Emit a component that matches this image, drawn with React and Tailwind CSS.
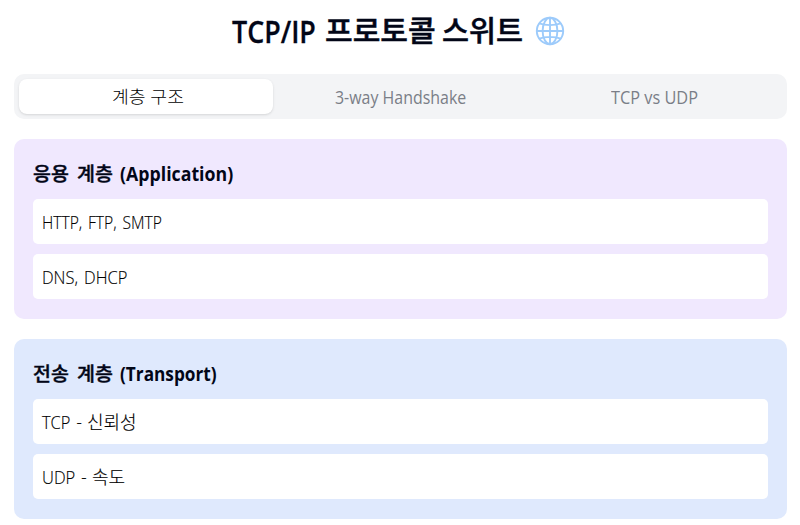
import React, { useLayoutEffect, useRef, useState } from "react";

const layers = [
  {
    color: "bg-[#f0e8fe]",
    title: [["응용 계층", 80], ["(Application)", 113]],
    rows: [
      [["HTTP, FTP, SMTP", 120]],
      [["DNS, DHCP", 85]],
    ],
  },
  {
    color: "bg-[#dfe9fd]",
    title: [["전송 계층", 80], ["(Transport)", 97]],
    rows: [
      [["TCP -", 40], ["신뢰성", 50]],
      [["UDP -", 45], ["속도", 33]],
    ],
  },
];

// Condenses or widens a run of text so that it fills the given width.
function Fit({ width, className = "", children }) {
  const ref = useRef(null);
  const [scale, setScale] = useState(1);
  useLayoutEffect(() => {
    setScale(width / ref.current.offsetWidth);
  }, [width]);
  return (
    <span className="inline-block shrink-0" style={{ width }}>
      <span
        ref={ref}
        className={`inline-block origin-left whitespace-pre ${className}`}
        style={{ transform: `scaleX(${scale})` }}
      >
        {children}
      </span>
    </span>
  );
}

function Globe() {
  return (
    <svg className="h-[30px] w-[30px]" viewBox="0 0 30 30" fill="none" stroke="#9dcbfb" strokeWidth="1.9">
      <circle cx="15" cy="15" r="13.2" />
      <ellipse cx="15" cy="15" rx="7.4" ry="13.2" />
      <path d="M15 1.8v26.4M1.8 15h26.4M4.2 7.4c6 2.3 15.6 2.3 21.6 0M4.2 22.6c6-2.3 15.6-2.3 21.6 0" />
    </svg>
  );
}

export default function App() {
  return (
    <main className="h-[525px] w-[800px] overflow-hidden bg-white pl-[14px] pr-[13px] font-['Open_Sans','Noto_Sans_CJK_KR',sans-serif] text-[#020617]">
      <h1 className="flex h-[74px] items-start pl-[218px] pt-[11px] text-[29px] leading-[40px] font-medium">
        <Fit width={84} className="text-[31px] font-semibold [-webkit-text-stroke:0.3px]">TCP/IP</Fit>
        <span className="ml-[9px] flex [-webkit-text-stroke:0.5px]">
          <Fit width={111}>프로토콜</Fit>
          <span className="ml-[6px]"><Fit width={81}>스위트</Fit></span>
        </span>
        <span className="ml-[12px] pt-[5px]"><Globe /></span>
      </h1>
      <div className="grid h-[45px] grid-cols-3 rounded-[10px] bg-[#f3f4f6] p-[5px] text-[18px] text-[#7a7e87]">
        <button className="flex items-center justify-center rounded-[8px] bg-white pr-[2px] text-[17px] font-light text-black shadow-sm"><Fit width={72}>계층 구조</Fit></button>
        <button className="flex items-center justify-center pt-px"><Fit width={131}>3-way Handshake</Fit></button>
        <button className="flex items-center justify-center pt-px"><Fit width={87}>TCP vs UDP</Fit></button>
      </div>
      {layers.map((layer) => (
        <section key={layer.color} className={`mt-5 h-[180px] rounded-[10px] px-[19px] pt-5 ${layer.color}`}>
          <h2 className="flex h-[40px] gap-[7px] text-[19px] leading-[31px] font-bold">
            {layer.title.map(([text, width], i) => (
              <Fit key={text} width={width} className={i === 0 ? "font-medium [-webkit-text-stroke:0.4px] [word-spacing:3px]" : ""}>{text}</Fit>
            ))}
          </h2>
          <div className="flex flex-col gap-[10px]">
            {layer.rows.map((row) => (
              <div key={row[0][0]} className="flex h-[45px] gap-[5px] rounded-[5px] bg-white pl-[9px] text-[18px] leading-[46px] font-light text-black [-webkit-text-stroke:0.15px]">
                {row.map(([text, width], i) => (
                  <Fit key={text} width={width} className={i === 1 ? "-mt-px" : "[word-spacing:2px]"}>{text}</Fit>
                ))}
              </div>
            ))}
          </div>
        </section>
      ))}
    </main>
  );
}
